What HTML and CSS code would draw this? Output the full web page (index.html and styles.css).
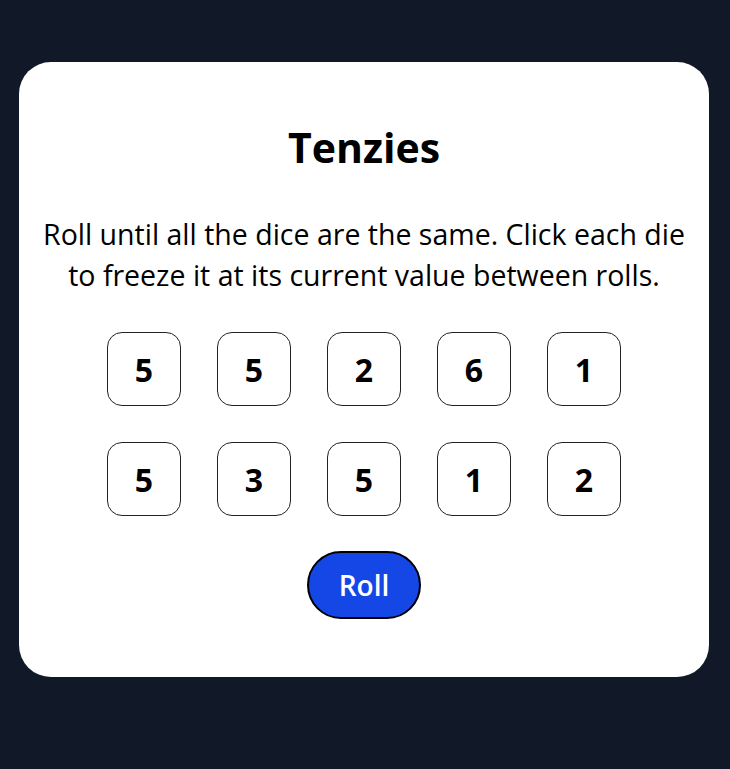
FILE: index.html
```html
<!DOCTYPE html>
<html lang="en">
<head>
<meta charset="utf-8">
<title>Tenzies</title>
<link rel="stylesheet" href="styles.css">
</head>
<body>
<main class="card">
  <h1 class="title">Tenzies</h1>
  <p class="instructions">Roll until all the dice are the same. Click each die to freeze it at its current value between rolls.</p>
  <div class="dice">
    <button class="die">5</button>
    <button class="die">5</button>
    <button class="die">2</button>
    <button class="die">6</button>
    <button class="die">1</button>
    <button class="die">5</button>
    <button class="die">3</button>
    <button class="die">5</button>
    <button class="die">1</button>
    <button class="die">2</button>
  </div>
  <button class="roll">Roll</button>
</main>
</body>
</html>
```
FILE: styles.css
```css
html, body {
  margin: 0;
  padding: 0;
  background: #111827;
  height: 100%;
}
body {
  font-family: "Open Sans", "Noto Sans", sans-serif;
  padding: 62px 21px 0 19px;
  box-sizing: border-box;
}
.card {
  background: #ffffff;
  border-radius: 32px;
  height: 615px;
  box-sizing: border-box;
  padding: 65px 20px 0;
  display: flex;
  flex-direction: column;
  align-items: center;
}
.title {
  margin: 0;
  font-size: 41px;
  font-weight: 700;
  line-height: 1;
  color: #000;
}
.instructions {
  margin: 46px 0 0;
  font-size: 28.5px;
  line-height: 41px;
  text-align: center;
  color: #000;
}
.dice {
  margin-top: 36px;
  display: grid;
  grid-template-columns: repeat(5, 74px);
  grid-auto-rows: 74px;
  gap: 36px;
}
.die {
  width: 74px;
  height: 74px;
  border: 1px solid #222;
  border-radius: 15px;
  background: #fff;
  font-family: inherit;
  font-size: 32px;
  font-weight: 700;
  color: #000;
  padding: 0;
}
.roll {
  margin-top: 35px;
  width: 114px;
  height: 68px;
  border: 2px solid #000;
  border-radius: 34px;
  background: #1447e6;
  color: #fff;
  font-family: inherit;
  font-size: 28px;
  font-weight: 600;
  padding: 0;
}
```
